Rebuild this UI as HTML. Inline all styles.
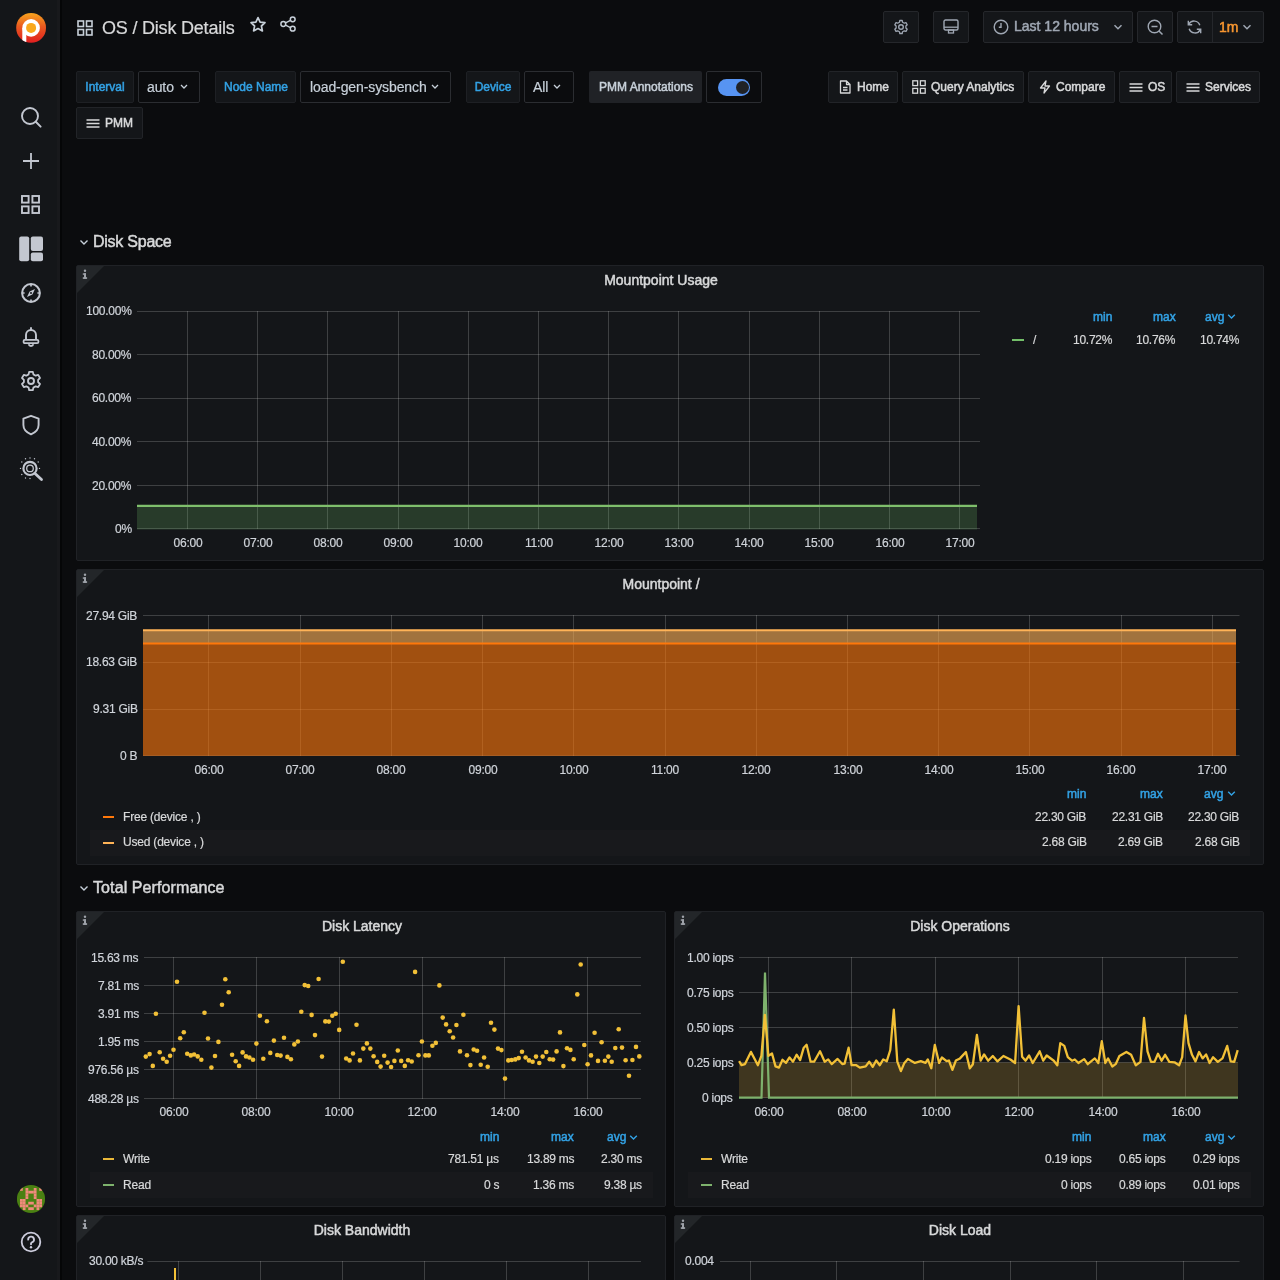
<!DOCTYPE html>
<html><head><meta charset="utf-8"><style>
html,body{margin:0;padding:0;width:1280px;height:1280px;overflow:hidden;background:#0b0c0e;}
body{position:relative;font-family:"Liberation Sans", sans-serif;}
.t{position:absolute;white-space:nowrap;line-height:1;will-change:transform;}
.b{position:absolute;}
.s{position:absolute;overflow:visible;}
</style></head><body>
<div class="b" style="left:0px;top:0px;width:60px;height:1280px;background:#141619;border-radius:0px;box-sizing:border-box;"></div>
<div class="b" style="left:57px;top:0px;width:3px;height:1280px;background:#18191c;border-radius:0px;box-sizing:border-box;"></div>
<div class="b" style="left:60px;top:0px;width:2px;height:1280px;background:#050607;border-radius:0px;box-sizing:border-box;"></div>
<svg class="s" style="left:14px;top:11px;" width="34" height="34" viewBox="0 0 34 34">
<defs><linearGradient id="lg" x1="0" y1="0" x2="0" y2="1"><stop offset="0" stop-color="#f7a41e"/><stop offset="0.45" stop-color="#ea5a1f"/><stop offset="1" stop-color="#e11e20"/></linearGradient>
<clipPath id="lc"><circle cx="17.1" cy="16.9" r="14.9"/></clipPath></defs>
<circle cx="17.1" cy="16.9" r="14.9" fill="url(#lg)"/>
<g clip-path="url(#lc)" fill="#fff"><circle cx="17.1" cy="16.9" r="8.8"/><rect x="8.3" y="16.9" width="4" height="18"/></g>
<circle cx="17.1" cy="16.9" r="5" fill="#f9a81c"/>
</svg>
<svg class="s" style="left:20px;top:105px;" width="23" height="23" viewBox="0 0 23 23"><circle cx="10" cy="11" r="8" fill="none" stroke="#c3c7d0" stroke-width="1.9"/><path d="M15.8 16.8 L20.6 21.6" stroke="#c3c7d0" stroke-width="2" stroke-linecap="round"/></svg>
<svg class="s" style="left:20px;top:150px;" width="22" height="22" viewBox="0 0 22 22"><path d="M11 3 V19 M3 11 H19" stroke="#c3c7d0" stroke-width="1.8"/></svg>
<svg class="s" style="left:20px;top:194px;" width="22" height="22" viewBox="0 0 22 22"><rect x="2.0" y="2.0" width="6.6" height="6.6" fill="none" stroke="#c3c7d0" stroke-width="1.9"/><rect x="2.0" y="12.4" width="6.6" height="6.6" fill="none" stroke="#c3c7d0" stroke-width="1.9"/><rect x="12.4" y="2.0" width="6.6" height="6.6" fill="none" stroke="#c3c7d0" stroke-width="1.9"/><rect x="12.4" y="12.4" width="6.6" height="6.6" fill="none" stroke="#c3c7d0" stroke-width="1.9"/></svg>
<svg class="s" style="left:19px;top:236px;" width="25" height="26" viewBox="0 0 25 26"><rect x="0.2" y="0.4" width="10" height="24.8" rx="2" fill="#c3c7d0"/><rect x="11.8" y="0.4" width="12.2" height="14.6" rx="2" fill="#c3c7d0"/><rect x="11.8" y="16.6" width="12.2" height="8.6" rx="2" fill="#c3c7d0"/></svg>
<svg class="s" style="left:20px;top:282px;" width="22" height="22" viewBox="0 0 22 22"><circle cx="11" cy="11" r="8.9" fill="none" stroke="#c3c7d0" stroke-width="2"/><path d="M15 7 L12.4 12.4 L7 15 L9.6 9.6 Z" fill="#c3c7d0"/><circle cx="11" cy="11" r="1" fill="#141619"/><path d="M11 2 V4.6 M11 17.4 V20 M2 11 H4.6 M17.4 11 H20" stroke="#c3c7d0" stroke-width="1.7"/></svg>
<svg class="s" style="left:20px;top:326px;" width="22" height="22" viewBox="0 0 22 22"><path d="M6 13.5 V9 A5 5 0 0 1 16 9 V13.5" fill="none" stroke="#c3c7d0" stroke-width="1.9"/><rect x="3.6" y="13.8" width="14.8" height="3.4" rx="1.2" fill="none" stroke="#c3c7d0" stroke-width="1.8"/><path d="M8.6 18.2 A2.5 2.5 0 0 0 13.4 18.2" stroke="#c3c7d0" stroke-width="1.8" fill="none"/><path d="M11 1.2 V4" stroke="#c3c7d0" stroke-width="1.9"/></svg>
<svg class="s" style="left:20px;top:370px;" width="22" height="22" viewBox="0 0 22 22"><circle cx="11" cy="11" r="3" fill="none" stroke="#c3c7d0" stroke-width="1.9"/><path d="M9.2 1.8 H12.8 L13.4 4.4 L15.7 5.7 L18.2 4.9 L20 8 L18.1 9.8 V12.2 L20 14 L18.2 17.1 L15.7 16.3 L13.4 17.6 L12.8 20.2 H9.2 L8.6 17.6 L6.3 16.3 L3.8 17.1 L2 14 L3.9 12.2 V9.8 L2 8 L3.8 4.9 L6.3 5.7 L8.6 4.4 Z" fill="none" stroke="#c3c7d0" stroke-width="1.8" stroke-linejoin="round"/></svg>
<svg class="s" style="left:20px;top:414px;" width="22" height="22" viewBox="0 0 22 22"><path d="M11 1.8 L18.6 4.6 V11 C18.6 15.6 15.2 18.6 11 20.4 C6.8 18.6 3.4 15.6 3.4 11 V4.6 Z" fill="none" stroke="#c3c7d0" stroke-width="1.9" stroke-linejoin="round"/></svg>
<svg class="s" style="left:19px;top:456px;" width="25" height="26" viewBox="0 0 25 26"><circle cx="11" cy="12.4" r="6.6" fill="none" stroke="#c3c7d0" stroke-width="2.2"/><circle cx="11" cy="12.4" r="3.3" fill="none" stroke="#c3c7d0" stroke-width="1.3"/><path d="M16 17.4 L22.5 23.5" stroke="#c3c7d0" stroke-width="2.8" stroke-linecap="round"/><g fill="#c3c7d0"><circle cx="11" cy="2" r="0.7"/><circle cx="6.5" cy="2.8" r="0.7"/><circle cx="15.5" cy="2.8" r="0.7"/><circle cx="2.8" cy="6" r="0.7"/><circle cx="19.2" cy="6" r="0.7"/><circle cx="1.5" cy="12.4" r="0.7"/><circle cx="20.5" cy="12.4" r="0.7"/><circle cx="2.8" cy="18.5" r="0.7"/><circle cx="6.5" cy="22" r="0.7"/><circle cx="11" cy="22.5" r="0.7"/></g></svg>
<svg class="s" style="left:17px;top:1185px;" width="28" height="28" viewBox="0 0 28 28"><clipPath id="av"><circle cx="14" cy="14" r="14.1"/></clipPath><g clip-path="url(#av)"><rect width="28" height="28" fill="#4a8012"/><g fill="#f08a7c"><rect x="3.00" y="3.00" width="2.8" height="2.8"/><rect x="8.50" y="3.00" width="2.8" height="2.8"/><rect x="16.75" y="3.00" width="2.8" height="2.8"/><rect x="22.25" y="3.00" width="2.8" height="2.8"/><rect x="8.50" y="5.75" width="2.8" height="2.8"/><rect x="11.25" y="5.75" width="2.8" height="2.8"/><rect x="14.00" y="5.75" width="2.8" height="2.8"/><rect x="16.75" y="5.75" width="2.8" height="2.8"/><rect x="8.50" y="8.50" width="2.8" height="2.8"/><rect x="16.75" y="8.50" width="2.8" height="2.8"/><rect x="8.50" y="11.25" width="2.8" height="2.8"/><rect x="16.75" y="11.25" width="2.8" height="2.8"/><rect x="3.00" y="14.00" width="2.8" height="2.8"/><rect x="5.75" y="14.00" width="2.8" height="2.8"/><rect x="19.50" y="14.00" width="2.8" height="2.8"/><rect x="22.25" y="14.00" width="2.8" height="2.8"/><rect x="3.00" y="16.75" width="2.8" height="2.8"/><rect x="5.75" y="16.75" width="2.8" height="2.8"/><rect x="11.25" y="16.75" width="2.8" height="2.8"/><rect x="14.00" y="16.75" width="2.8" height="2.8"/><rect x="19.50" y="16.75" width="2.8" height="2.8"/><rect x="22.25" y="16.75" width="2.8" height="2.8"/><rect x="3.00" y="19.50" width="2.8" height="2.8"/><rect x="5.75" y="19.50" width="2.8" height="2.8"/><rect x="8.50" y="19.50" width="2.8" height="2.8"/><rect x="16.75" y="19.50" width="2.8" height="2.8"/><rect x="19.50" y="19.50" width="2.8" height="2.8"/><rect x="22.25" y="19.50" width="2.8" height="2.8"/><rect x="5.75" y="22.25" width="2.8" height="2.8"/><rect x="11.25" y="22.25" width="2.8" height="2.8"/><rect x="14.00" y="22.25" width="2.8" height="2.8"/><rect x="19.50" y="22.25" width="2.8" height="2.8"/></g></g></svg>
<svg class="s" style="left:20px;top:1231px;" width="22" height="22" viewBox="0 0 22 22"><circle cx="11" cy="11" r="9.3" fill="none" stroke="#ccccdc" stroke-width="1.8"/><path d="M8.2 8.6 A2.9 2.9 0 1 1 11.9 11.3 C11.2 11.6 11 12 11 12.8 V13.3" fill="none" stroke="#ccccdc" stroke-width="1.9" stroke-linecap="round"/><circle cx="11" cy="16.3" r="1.2" fill="#ccccdc"/></svg>
<svg class="s" style="left:77px;top:20px;" width="16" height="16" viewBox="0 0 16 16"><rect x="1" y="1" width="5.5" height="5.5" fill="none" stroke="#c7d0d9" stroke-width="1.6"/><rect x="9.5" y="1" width="5.5" height="5.5" fill="none" stroke="#c7d0d9" stroke-width="1.6"/><rect x="1" y="9.5" width="5.5" height="5.5" fill="none" stroke="#c7d0d9" stroke-width="1.6"/><rect x="9.5" y="9.5" width="5.5" height="5.5" fill="none" stroke="#c7d0d9" stroke-width="1.6"/></svg>
<div class="t" style="left:102px;top:18.76px;font-size:18px;color:#d8d9da;font-weight:normal;letter-spacing:-0.2px;-webkit-text-stroke:0.2px #d8d9da;">OS / Disk Details</div>
<svg class="s" style="left:249px;top:16px;" width="18" height="17" viewBox="0 0 18 17"><path d="M9 1.6 L11.1 6.1 L16 6.7 L12.4 10 L13.4 14.9 L9 12.5 L4.6 14.9 L5.6 10 L2 6.7 L6.9 6.1 Z" fill="none" stroke="#c7d0d9" stroke-width="1.7" stroke-linejoin="round"/></svg>
<svg class="s" style="left:279px;top:15px;" width="18" height="18" viewBox="0 0 18 18"><circle cx="13.7" cy="4.3" r="2.4" fill="none" stroke="#c7d0d9" stroke-width="1.5"/><circle cx="4.3" cy="9" r="2.4" fill="none" stroke="#c7d0d9" stroke-width="1.5"/><circle cx="13.7" cy="13.7" r="2.4" fill="none" stroke="#c7d0d9" stroke-width="1.5"/><path d="M6.5 7.9 L11.5 5.4 M6.5 10.1 L11.5 12.6" stroke="#c7d0d9" stroke-width="1.4"/></svg>
<div class="b" style="left:883px;top:11px;width:36px;height:32px;background:#141619;border:1px solid #25272b;border-radius:2px;box-sizing:border-box;"></div>
<svg class="s" style="left:893px;top:19px;" width="16" height="16" viewBox="0 0 16 16"><circle cx="8" cy="8" r="2.3" fill="none" stroke="#9fa7b3" stroke-width="1.4"/><path d="M6.8 1.5 H9.2 L9.6 3.3 L11.3 4.2 L13 3.6 L14.2 5.7 L12.9 7 V9 L14.2 10.3 L13 12.4 L11.3 11.8 L9.6 12.7 L9.2 14.5 H6.8 L6.4 12.7 L4.7 11.8 L3 12.4 L1.8 10.3 L3.1 9 V7 L1.8 5.7 L3 3.6 L4.7 4.2 L6.4 3.3 Z" fill="none" stroke="#9fa7b3" stroke-width="1.3" stroke-linejoin="round"/></svg>
<div class="b" style="left:933px;top:11px;width:36px;height:32px;background:#141619;border:1px solid #25272b;border-radius:2px;box-sizing:border-box;"></div>
<svg class="s" style="left:943px;top:19px;" width="16" height="16" viewBox="0 0 16 16"><rect x="1" y="1" width="14" height="10" rx="1.5" fill="none" stroke="#9fa7b3" stroke-width="1.4"/><path d="M1 8.2 H15" stroke="#9fa7b3" stroke-width="1.3"/><rect x="5.5" y="11" width="5" height="3" fill="none" stroke="#9fa7b3" stroke-width="1.3"/></svg>
<div class="b" style="left:983px;top:11px;width:150px;height:32px;background:#141619;border:1px solid #25272b;border-radius:2px;box-sizing:border-box;"></div>
<svg class="s" style="left:993px;top:19px;" width="16" height="16" viewBox="0 0 16 16"><circle cx="8" cy="8" r="6.8" fill="none" stroke="#9fa7b3" stroke-width="1.4"/><path d="M8 4 V8.3 H5.8" fill="none" stroke="#9fa7b3" stroke-width="1.4"/></svg>
<div class="t" style="left:1014px;top:19.15px;font-size:14px;color:#9fa7b3;font-weight:normal;letter-spacing:0px;-webkit-text-stroke:0.5px #9fa7b3;">Last 12 hours</div>
<svg class="s" style="left:1113px;top:22px;" width="10" height="10" viewBox="0 0 10 10"><path d="M1.5 3.2 L5 6.7 L8.5 3.2" fill="none" stroke="#9fa7b3" stroke-width="1.5"/></svg>
<div class="b" style="left:1137px;top:11px;width:36px;height:32px;background:#141619;border:1px solid #25272b;border-radius:2px;box-sizing:border-box;"></div>
<svg class="s" style="left:1147px;top:19px;" width="17" height="17" viewBox="0 0 17 17"><circle cx="7.5" cy="7.5" r="6.3" fill="none" stroke="#9fa7b3" stroke-width="1.4"/><path d="M4.5 7.5 H10.5 M12 12 L15.5 15.5" stroke="#9fa7b3" stroke-width="1.5"/></svg>
<div class="b" style="left:1177px;top:11px;width:87px;height:32px;background:#141619;border:1px solid #25272b;border-radius:2px;box-sizing:border-box;"></div>
<div class="b" style="left:1212px;top:12px;width:1px;height:30px;background:#25272b;border-radius:0px;box-sizing:border-box;"></div>
<svg class="s" style="left:1186px;top:19px;" width="17" height="16" viewBox="0 0 17 16"><path d="M13.8 6.3 A6 6 0 0 0 2.8 5.2 M3.2 9.7 A6 6 0 0 0 14.2 10.8" fill="none" stroke="#9fa7b3" stroke-width="1.4"/><path d="M2.3 1.8 V5.7 H6.2 M14.7 14.2 V10.3 H10.8" fill="none" stroke="#9fa7b3" stroke-width="1.4"/></svg>
<div class="t" style="left:1219px;top:20.15px;font-size:14px;color:#f79630;font-weight:normal;letter-spacing:0px;-webkit-text-stroke:0.5px #f79630;">1m</div>
<svg class="s" style="left:1242px;top:22px;" width="10" height="10" viewBox="0 0 10 10"><path d="M1.5 3.2 L5 6.7 L8.5 3.2" fill="none" stroke="#9fa7b3" stroke-width="1.5"/></svg>
<div class="b" style="left:76px;top:71px;width:58px;height:32px;background:#141619;border:1px solid #1e2024;border-radius:2px;box-sizing:border-box;"></div>
<div class="t" style="left:-195.0px;width:600px;text-align:center;top:80.84px;font-size:12px;color:#33a2e5;font-weight:normal;letter-spacing:0px;-webkit-text-stroke:0.5px #33a2e5;">Interval</div>
<div class="b" style="left:138px;top:71px;width:62px;height:32px;background:#0b0c0e;border:1px solid #2b2d31;border-radius:2px;box-sizing:border-box;"></div>
<div class="t" style="left:147px;top:80.15px;font-size:14px;color:#c7d0d9;font-weight:normal;letter-spacing:-0.1px;-webkit-text-stroke:0.2px #c7d0d9;">auto</div>
<svg class="s" style="left:179px;top:81px;" width="10" height="10" viewBox="0 0 10 10"><path d="M2 4 L5 7 L8 4" fill="none" stroke="#c7d0d9" stroke-width="1.3"/></svg>
<div class="b" style="left:215px;top:71px;width:81px;height:32px;background:#141619;border:1px solid #1e2024;border-radius:2px;box-sizing:border-box;"></div>
<div class="t" style="left:-44.5px;width:600px;text-align:center;top:80.84px;font-size:12px;color:#33a2e5;font-weight:normal;letter-spacing:0px;-webkit-text-stroke:0.5px #33a2e5;">Node Name</div>
<div class="b" style="left:300px;top:71px;width:151px;height:32px;background:#0b0c0e;border:1px solid #2b2d31;border-radius:2px;box-sizing:border-box;"></div>
<div class="t" style="left:309.5px;top:80.15px;font-size:14px;color:#c7d0d9;font-weight:normal;letter-spacing:-0.1px;-webkit-text-stroke:0.2px #c7d0d9;">load-gen-sysbench</div>
<svg class="s" style="left:430px;top:81px;" width="10" height="10" viewBox="0 0 10 10"><path d="M2 4 L5 7 L8 4" fill="none" stroke="#c7d0d9" stroke-width="1.3"/></svg>
<div class="b" style="left:466px;top:71px;width:54px;height:32px;background:#141619;border:1px solid #1e2024;border-radius:2px;box-sizing:border-box;"></div>
<div class="t" style="left:193.0px;width:600px;text-align:center;top:80.84px;font-size:12px;color:#33a2e5;font-weight:normal;letter-spacing:0px;-webkit-text-stroke:0.5px #33a2e5;">Device</div>
<div class="b" style="left:524px;top:71px;width:50px;height:32px;background:#0b0c0e;border:1px solid #2b2d31;border-radius:2px;box-sizing:border-box;"></div>
<div class="t" style="left:533px;top:80.15px;font-size:14px;color:#c7d0d9;font-weight:normal;letter-spacing:-0.1px;-webkit-text-stroke:0.2px #c7d0d9;">All</div>
<svg class="s" style="left:552px;top:81px;" width="10" height="10" viewBox="0 0 10 10"><path d="M2 4 L5 7 L8 4" fill="none" stroke="#c7d0d9" stroke-width="1.3"/></svg>
<div class="b" style="left:589px;top:71px;width:113px;height:32px;background:#202226;border-radius:2px;box-sizing:border-box;"></div>
<div class="t" style="left:345.5px;width:600px;text-align:center;top:80.84px;font-size:12px;color:#c7d0d9;font-weight:normal;letter-spacing:0px;-webkit-text-stroke:0.5px #c7d0d9;">PMM Annotations</div>
<div class="b" style="left:706px;top:71px;width:56px;height:32px;background:#0b0c0e;border:1px solid #2b2d31;border-radius:2px;box-sizing:border-box;"></div>
<div class="b" style="left:718px;top:79px;width:32px;height:16.5px;background:#5794f2;border-radius:8.5px;box-sizing:border-box;"></div>
<div class="b" style="left:735.5px;top:80.5px;width:13.5px;height:13.5px;border-radius:50%;background:#202226;"></div>
<div class="b" style="left:828px;top:71px;width:70px;height:32px;background:#141619;border:1px solid #222428;border-radius:2px;box-sizing:border-box;"></div>
<svg class="s" style="left:838px;top:80px;" width="14" height="14" viewBox="0 0 14 14"><path d="M2.5 1 H8.5 L12 4.5 V13 H2.5 Z M8.5 1 V4.5 H12 M5 7.5 H9.5 M5 10 H9.5" fill="none" stroke="#d8d9da" stroke-width="1.3" stroke-linejoin="round"/></svg>
<div class="t" style="left:856.5px;top:80.84px;font-size:12px;color:#d8d9da;font-weight:normal;letter-spacing:0px;-webkit-text-stroke:0.5px #d8d9da;">Home</div>
<div class="b" style="left:902px;top:71px;width:122px;height:32px;background:#141619;border:1px solid #222428;border-radius:2px;box-sizing:border-box;"></div>
<svg class="s" style="left:912px;top:80px;" width="14" height="14" viewBox="0 0 14 14"><rect x="0.8" y="0.8" width="4.8" height="4.8" fill="none" stroke="#d8d9da" stroke-width="1.3"/><rect x="8.4" y="0.8" width="4.8" height="4.8" fill="none" stroke="#d8d9da" stroke-width="1.3"/><rect x="0.8" y="8.4" width="4.8" height="4.8" fill="none" stroke="#d8d9da" stroke-width="1.3"/><rect x="8.4" y="8.4" width="4.8" height="4.8" fill="none" stroke="#d8d9da" stroke-width="1.3"/></svg>
<div class="t" style="left:930.5px;top:80.84px;font-size:12px;color:#d8d9da;font-weight:normal;letter-spacing:0px;-webkit-text-stroke:0.5px #d8d9da;">Query Analytics</div>
<div class="b" style="left:1028px;top:71px;width:87px;height:32px;background:#141619;border:1px solid #222428;border-radius:2px;box-sizing:border-box;"></div>
<svg class="s" style="left:1038px;top:80px;" width="14" height="14" viewBox="0 0 14 14"><path d="M8 1 L2.5 8 H7 L6 13 L11.5 6 H7 Z" fill="none" stroke="#d8d9da" stroke-width="1.3" stroke-linejoin="round"/></svg>
<div class="t" style="left:1056px;top:80.84px;font-size:12px;color:#d8d9da;font-weight:normal;letter-spacing:0px;-webkit-text-stroke:0.5px #d8d9da;">Compare</div>
<div class="b" style="left:1119px;top:71px;width:53px;height:32px;background:#141619;border:1px solid #222428;border-radius:2px;box-sizing:border-box;"></div>
<svg class="s" style="left:1129px;top:81.5px;" width="14" height="11" viewBox="0 0 14 11"><path d="M0.5 2 H13.5 M0.5 5.5 H13.5 M0.5 9 H13.5" stroke="#d8d9da" stroke-width="1.5"/></svg>
<div class="t" style="left:1147.5px;top:80.84px;font-size:12px;color:#d8d9da;font-weight:normal;letter-spacing:0px;-webkit-text-stroke:0.5px #d8d9da;">OS</div>
<div class="b" style="left:1176px;top:71px;width:84px;height:32px;background:#141619;border:1px solid #222428;border-radius:2px;box-sizing:border-box;"></div>
<svg class="s" style="left:1186px;top:81.5px;" width="14" height="11" viewBox="0 0 14 11"><path d="M0.5 2 H13.5 M0.5 5.5 H13.5 M0.5 9 H13.5" stroke="#d8d9da" stroke-width="1.5"/></svg>
<div class="t" style="left:1204.5px;top:80.84px;font-size:12px;color:#d8d9da;font-weight:normal;letter-spacing:0px;-webkit-text-stroke:0.5px #d8d9da;">Services</div>
<div class="b" style="left:76px;top:107px;width:67px;height:32px;background:#141619;border:1px solid #222428;border-radius:2px;box-sizing:border-box;"></div>
<svg class="s" style="left:86px;top:117.5px;" width="14" height="11" viewBox="0 0 14 11"><path d="M0.5 2 H13.5 M0.5 5.5 H13.5 M0.5 9 H13.5" stroke="#d8d9da" stroke-width="1.5"/></svg>
<div class="t" style="left:104.5px;top:116.84px;font-size:12px;color:#d8d9da;font-weight:normal;letter-spacing:0px;-webkit-text-stroke:0.5px #d8d9da;">PMM</div>
<svg class="s" style="left:79px;top:239px;" width="10" height="8" viewBox="0 0 10 8"><path d="M1.5 1.5 L5 5 L8.5 1.5" fill="none" stroke="#c7d0d9" stroke-width="1.4"/></svg>
<div class="t" style="left:92.5px;top:234.06px;font-size:16px;color:#d8d9da;font-weight:normal;letter-spacing:-0.25px;-webkit-text-stroke:0.5px #d8d9da;">Disk Space</div>
<div class="b" style="left:76px;top:265px;width:1188px;height:296px;background:#141619;border:1px solid #202226;border-radius:2px;box-sizing:border-box;"></div>
<svg class="s" style="left:77px;top:266px;" width="28" height="28" viewBox="0 0 28 28"><path d="M0 0 H27 L0 27 Z" fill="#232629"/><g fill="#9ea2a9"><circle cx="8" cy="4.8" r="1.2"/><rect x="5.8" y="7.3" width="3.2" height="1.5"/><rect x="7" y="7.3" width="2" height="5.5"/><rect x="5.8" y="11.2" width="4.3" height="1.7"/></g></svg>
<div class="t" style="left:361px;width:600px;text-align:center;top:273.15px;font-size:14px;color:#d8d9da;font-weight:normal;letter-spacing:0px;-webkit-text-stroke:0.5px #d8d9da;">Mountpoint Usage</div>
<svg class="s" style="left:0px;top:0px;pointer-events:none" width="1280" height="1280" viewBox="0 0 1280 1280"><g stroke="rgba(255,255,255,0.18)" stroke-width="1"><line x1="137" y1="311.5" x2="980" y2="311.5" /><line x1="137" y1="354.5" x2="980" y2="354.5" /><line x1="137" y1="398.5" x2="980" y2="398.5" /><line x1="137" y1="441.5" x2="980" y2="441.5" /><line x1="137" y1="485.5" x2="980" y2="485.5" /><line x1="137" y1="528.5" x2="980" y2="528.5" /><line x1="187.5" y1="311" x2="187.5" y2="529" /><line x1="257.5" y1="311" x2="257.5" y2="529" /><line x1="327.5" y1="311" x2="327.5" y2="529" /><line x1="398.5" y1="311" x2="398.5" y2="529" /><line x1="468.5" y1="311" x2="468.5" y2="529" /><line x1="538.5" y1="311" x2="538.5" y2="529" /><line x1="608.5" y1="311" x2="608.5" y2="529" /><line x1="678.5" y1="311" x2="678.5" y2="529" /><line x1="749.5" y1="311" x2="749.5" y2="529" /><line x1="819.5" y1="311" x2="819.5" y2="529" /><line x1="889.5" y1="311" x2="889.5" y2="529" /><line x1="959.5" y1="311" x2="959.5" y2="529" /></g><rect x="137" y="506" width="840" height="23.5" fill="rgba(115,191,105,0.22)"/><line x1="137" y1="505.8" x2="977" y2="505.8" stroke="#7fbf6c" stroke-width="2.3"/></svg>
<div class="t" style="right:1148.5px;top:305.44px;font-size:12px;color:#d0d4da;font-weight:normal;letter-spacing:-0.25px;-webkit-text-stroke:0.2px #d0d4da;">100.00%</div>
<div class="t" style="right:1148.5px;top:348.54px;font-size:12px;color:#d0d4da;font-weight:normal;letter-spacing:-0.25px;-webkit-text-stroke:0.2px #d0d4da;">80.00%</div>
<div class="t" style="right:1148.5px;top:392.44px;font-size:12px;color:#d0d4da;font-weight:normal;letter-spacing:-0.25px;-webkit-text-stroke:0.2px #d0d4da;">60.00%</div>
<div class="t" style="right:1148.5px;top:435.54px;font-size:12px;color:#d0d4da;font-weight:normal;letter-spacing:-0.25px;-webkit-text-stroke:0.2px #d0d4da;">40.00%</div>
<div class="t" style="right:1148.5px;top:479.54px;font-size:12px;color:#d0d4da;font-weight:normal;letter-spacing:-0.25px;-webkit-text-stroke:0.2px #d0d4da;">20.00%</div>
<div class="t" style="right:1148.5px;top:522.64px;font-size:12px;color:#d0d4da;font-weight:normal;letter-spacing:-0.25px;-webkit-text-stroke:0.2px #d0d4da;">0%</div>
<div class="t" style="left:-112.5px;width:600px;text-align:center;top:536.84px;font-size:12px;color:#d0d4da;font-weight:normal;letter-spacing:-0.25px;-webkit-text-stroke:0.2px #d0d4da;">06:00</div>
<div class="t" style="left:-42.30000000000001px;width:600px;text-align:center;top:536.84px;font-size:12px;color:#d0d4da;font-weight:normal;letter-spacing:-0.25px;-webkit-text-stroke:0.2px #d0d4da;">07:00</div>
<div class="t" style="left:27.899999999999977px;width:600px;text-align:center;top:536.84px;font-size:12px;color:#d0d4da;font-weight:normal;letter-spacing:-0.25px;-webkit-text-stroke:0.2px #d0d4da;">08:00</div>
<div class="t" style="left:98.10000000000002px;width:600px;text-align:center;top:536.84px;font-size:12px;color:#d0d4da;font-weight:normal;letter-spacing:-0.25px;-webkit-text-stroke:0.2px #d0d4da;">09:00</div>
<div class="t" style="left:168.3px;width:600px;text-align:center;top:536.84px;font-size:12px;color:#d0d4da;font-weight:normal;letter-spacing:-0.25px;-webkit-text-stroke:0.2px #d0d4da;">10:00</div>
<div class="t" style="left:238.5px;width:600px;text-align:center;top:536.84px;font-size:12px;color:#d0d4da;font-weight:normal;letter-spacing:-0.25px;-webkit-text-stroke:0.2px #d0d4da;">11:00</div>
<div class="t" style="left:308.70000000000005px;width:600px;text-align:center;top:536.84px;font-size:12px;color:#d0d4da;font-weight:normal;letter-spacing:-0.25px;-webkit-text-stroke:0.2px #d0d4da;">12:00</div>
<div class="t" style="left:378.9000000000001px;width:600px;text-align:center;top:536.84px;font-size:12px;color:#d0d4da;font-weight:normal;letter-spacing:-0.25px;-webkit-text-stroke:0.2px #d0d4da;">13:00</div>
<div class="t" style="left:449.1px;width:600px;text-align:center;top:536.84px;font-size:12px;color:#d0d4da;font-weight:normal;letter-spacing:-0.25px;-webkit-text-stroke:0.2px #d0d4da;">14:00</div>
<div class="t" style="left:519.3000000000001px;width:600px;text-align:center;top:536.84px;font-size:12px;color:#d0d4da;font-weight:normal;letter-spacing:-0.25px;-webkit-text-stroke:0.2px #d0d4da;">15:00</div>
<div class="t" style="left:589.5px;width:600px;text-align:center;top:536.84px;font-size:12px;color:#d0d4da;font-weight:normal;letter-spacing:-0.25px;-webkit-text-stroke:0.2px #d0d4da;">16:00</div>
<div class="t" style="left:659.7px;width:600px;text-align:center;top:536.84px;font-size:12px;color:#d0d4da;font-weight:normal;letter-spacing:-0.25px;-webkit-text-stroke:0.2px #d0d4da;">17:00</div>
<div class="t" style="right:168px;top:310.84px;font-size:12px;color:#33a2e5;font-weight:normal;letter-spacing:0px;-webkit-text-stroke:0.5px #33a2e5;">min</div>
<div class="t" style="right:104.70000000000005px;top:310.84px;font-size:12px;color:#33a2e5;font-weight:normal;letter-spacing:0px;-webkit-text-stroke:0.5px #33a2e5;">max</div>
<div class="t" style="right:56px;top:310.84px;font-size:12px;color:#33a2e5;font-weight:normal;letter-spacing:0px;-webkit-text-stroke:0.5px #33a2e5;">avg</div>
<svg class="s" style="left:1227px;top:313px;" width="9" height="7" viewBox="0 0 9 7"><path d="M1.2 1.8 L4.5 5 L7.8 1.8" fill="none" stroke="#33a2e5" stroke-width="1.4"/></svg>
<div class="b" style="left:1012px;top:339px;width:12px;height:2px;background:#73bf69;border-radius:0px;box-sizing:border-box;"></div>
<div class="t" style="left:1033px;top:333.84px;font-size:12px;color:#d8d9da;font-weight:normal;letter-spacing:0px;-webkit-text-stroke:0.2px #d8d9da;">/</div>
<div class="t" style="right:168px;top:333.84px;font-size:12px;color:#d8d9da;font-weight:normal;letter-spacing:-0.25px;-webkit-text-stroke:0.2px #d8d9da;">10.72%</div>
<div class="t" style="right:104.70000000000005px;top:333.84px;font-size:12px;color:#d8d9da;font-weight:normal;letter-spacing:-0.25px;-webkit-text-stroke:0.2px #d8d9da;">10.76%</div>
<div class="t" style="right:40.59999999999991px;top:333.84px;font-size:12px;color:#d8d9da;font-weight:normal;letter-spacing:-0.25px;-webkit-text-stroke:0.2px #d8d9da;">10.74%</div>
<div class="b" style="left:76px;top:569px;width:1188px;height:296px;background:#141619;border:1px solid #202226;border-radius:2px;box-sizing:border-box;"></div>
<svg class="s" style="left:77px;top:570px;" width="28" height="28" viewBox="0 0 28 28"><path d="M0 0 H27 L0 27 Z" fill="#232629"/><g fill="#9ea2a9"><circle cx="8" cy="4.8" r="1.2"/><rect x="5.8" y="7.3" width="3.2" height="1.5"/><rect x="7" y="7.3" width="2" height="5.5"/><rect x="5.8" y="11.2" width="4.3" height="1.7"/></g></svg>
<div class="t" style="left:361px;width:600px;text-align:center;top:577.15px;font-size:14px;color:#d8d9da;font-weight:normal;letter-spacing:0px;-webkit-text-stroke:0.5px #d8d9da;">Mountpoint /</div>
<svg class="s" style="left:0px;top:0px;pointer-events:none" width="1280" height="1280" viewBox="0 0 1280 1280"><g stroke="rgba(255,255,255,0.18)" stroke-width="1"><line x1="143" y1="615.5" x2="1239.5" y2="615.5" /><line x1="143" y1="662.5" x2="1239.5" y2="662.5" /><line x1="143" y1="709.5" x2="1239.5" y2="709.5" /><line x1="143" y1="755.5" x2="1239.5" y2="755.5" /><line x1="208.5" y1="615" x2="208.5" y2="756" /><line x1="300.5" y1="615" x2="300.5" y2="756" /><line x1="391.5" y1="615" x2="391.5" y2="756" /><line x1="482.5" y1="615" x2="482.5" y2="756" /><line x1="573.5" y1="615" x2="573.5" y2="756" /><line x1="665.5" y1="615" x2="665.5" y2="756" /><line x1="756.5" y1="615" x2="756.5" y2="756" /><line x1="847.5" y1="615" x2="847.5" y2="756" /><line x1="938.5" y1="615" x2="938.5" y2="756" /><line x1="1029.5" y1="615" x2="1029.5" y2="756" /><line x1="1121.5" y1="615" x2="1121.5" y2="756" /><line x1="1212.5" y1="615" x2="1212.5" y2="756" /></g><rect x="143" y="643.4" width="1093" height="112.5" fill="rgba(255,120,10,0.6)"/><rect x="143" y="630" width="1093" height="13.4" fill="rgba(255,179,87,0.6)"/><line x1="143" y1="630.2" x2="1236" y2="630.2" stroke="#ffb357" stroke-width="2"/><line x1="143" y1="643.6" x2="1236" y2="643.6" stroke="#ff780a" stroke-width="2"/></svg>
<div class="t" style="right:1142.5px;top:609.54px;font-size:12px;color:#d0d4da;font-weight:normal;letter-spacing:-0.25px;-webkit-text-stroke:0.2px #d0d4da;">27.94 GiB</div>
<div class="t" style="right:1142.5px;top:656.34px;font-size:12px;color:#d0d4da;font-weight:normal;letter-spacing:-0.25px;-webkit-text-stroke:0.2px #d0d4da;">18.63 GiB</div>
<div class="t" style="right:1142.5px;top:703.14px;font-size:12px;color:#d0d4da;font-weight:normal;letter-spacing:-0.25px;-webkit-text-stroke:0.2px #d0d4da;">9.31 GiB</div>
<div class="t" style="right:1142.5px;top:749.64px;font-size:12px;color:#d0d4da;font-weight:normal;letter-spacing:-0.25px;-webkit-text-stroke:0.2px #d0d4da;">0 B</div>
<div class="t" style="left:-91.1px;width:600px;text-align:center;top:763.84px;font-size:12px;color:#d0d4da;font-weight:normal;letter-spacing:-0.25px;-webkit-text-stroke:0.2px #d0d4da;">06:00</div>
<div class="t" style="left:0.12999999999999545px;width:600px;text-align:center;top:763.84px;font-size:12px;color:#d0d4da;font-weight:normal;letter-spacing:-0.25px;-webkit-text-stroke:0.2px #d0d4da;">07:00</div>
<div class="t" style="left:91.36000000000001px;width:600px;text-align:center;top:763.84px;font-size:12px;color:#d0d4da;font-weight:normal;letter-spacing:-0.25px;-webkit-text-stroke:0.2px #d0d4da;">08:00</div>
<div class="t" style="left:182.59000000000003px;width:600px;text-align:center;top:763.84px;font-size:12px;color:#d0d4da;font-weight:normal;letter-spacing:-0.25px;-webkit-text-stroke:0.2px #d0d4da;">09:00</div>
<div class="t" style="left:273.82000000000005px;width:600px;text-align:center;top:763.84px;font-size:12px;color:#d0d4da;font-weight:normal;letter-spacing:-0.25px;-webkit-text-stroke:0.2px #d0d4da;">10:00</div>
<div class="t" style="left:365.05000000000007px;width:600px;text-align:center;top:763.84px;font-size:12px;color:#d0d4da;font-weight:normal;letter-spacing:-0.25px;-webkit-text-stroke:0.2px #d0d4da;">11:00</div>
<div class="t" style="left:456.28px;width:600px;text-align:center;top:763.84px;font-size:12px;color:#d0d4da;font-weight:normal;letter-spacing:-0.25px;-webkit-text-stroke:0.2px #d0d4da;">12:00</div>
<div class="t" style="left:547.51px;width:600px;text-align:center;top:763.84px;font-size:12px;color:#d0d4da;font-weight:normal;letter-spacing:-0.25px;-webkit-text-stroke:0.2px #d0d4da;">13:00</div>
<div class="t" style="left:638.74px;width:600px;text-align:center;top:763.84px;font-size:12px;color:#d0d4da;font-weight:normal;letter-spacing:-0.25px;-webkit-text-stroke:0.2px #d0d4da;">14:00</div>
<div class="t" style="left:729.97px;width:600px;text-align:center;top:763.84px;font-size:12px;color:#d0d4da;font-weight:normal;letter-spacing:-0.25px;-webkit-text-stroke:0.2px #d0d4da;">15:00</div>
<div class="t" style="left:821.2px;width:600px;text-align:center;top:763.84px;font-size:12px;color:#d0d4da;font-weight:normal;letter-spacing:-0.25px;-webkit-text-stroke:0.2px #d0d4da;">16:00</div>
<div class="t" style="left:912.4300000000001px;width:600px;text-align:center;top:763.84px;font-size:12px;color:#d0d4da;font-weight:normal;letter-spacing:-0.25px;-webkit-text-stroke:0.2px #d0d4da;">17:00</div>
<div class="t" style="right:193.4000000000001px;top:787.84px;font-size:12px;color:#33a2e5;font-weight:normal;letter-spacing:0px;-webkit-text-stroke:0.5px #33a2e5;">min</div>
<div class="t" style="right:117.20000000000005px;top:787.84px;font-size:12px;color:#33a2e5;font-weight:normal;letter-spacing:0px;-webkit-text-stroke:0.5px #33a2e5;">max</div>
<div class="t" style="right:56.5px;top:787.84px;font-size:12px;color:#33a2e5;font-weight:normal;letter-spacing:0px;-webkit-text-stroke:0.5px #33a2e5;">avg</div>
<svg class="s" style="left:1226.5px;top:790px;" width="9" height="7" viewBox="0 0 9 7"><path d="M1.2 1.8 L4.5 5 L7.8 1.8" fill="none" stroke="#33a2e5" stroke-width="1.4"/></svg>
<div class="b" style="left:90px;top:829.5px;width:1160px;height:26px;background:#18191c;border-radius:0px;box-sizing:border-box;"></div>
<div class="b" style="left:102.5px;top:816px;width:11px;height:2px;background:#ff780a;border-radius:0px;box-sizing:border-box;"></div>
<div class="t" style="left:123px;top:810.84px;font-size:12px;color:#d8d9da;font-weight:normal;letter-spacing:-0.2px;-webkit-text-stroke:0.2px #d8d9da;">Free (device , )</div>
<div class="t" style="right:193.4000000000001px;top:810.84px;font-size:12px;color:#d8d9da;font-weight:normal;letter-spacing:-0.25px;-webkit-text-stroke:0.2px #d8d9da;">22.30 GiB</div>
<div class="t" style="right:117.20000000000005px;top:810.84px;font-size:12px;color:#d8d9da;font-weight:normal;letter-spacing:-0.25px;-webkit-text-stroke:0.2px #d8d9da;">22.31 GiB</div>
<div class="t" style="right:40.59999999999991px;top:810.84px;font-size:12px;color:#d8d9da;font-weight:normal;letter-spacing:-0.25px;-webkit-text-stroke:0.2px #d8d9da;">22.30 GiB</div>
<div class="b" style="left:102.5px;top:841.5px;width:11px;height:2px;background:#ffb357;border-radius:0px;box-sizing:border-box;"></div>
<div class="t" style="left:123px;top:836.34px;font-size:12px;color:#d8d9da;font-weight:normal;letter-spacing:-0.2px;-webkit-text-stroke:0.2px #d8d9da;">Used (device , )</div>
<div class="t" style="right:193.4000000000001px;top:836.34px;font-size:12px;color:#d8d9da;font-weight:normal;letter-spacing:-0.25px;-webkit-text-stroke:0.2px #d8d9da;">2.68 GiB</div>
<div class="t" style="right:117.20000000000005px;top:836.34px;font-size:12px;color:#d8d9da;font-weight:normal;letter-spacing:-0.25px;-webkit-text-stroke:0.2px #d8d9da;">2.69 GiB</div>
<div class="t" style="right:40.59999999999991px;top:836.34px;font-size:12px;color:#d8d9da;font-weight:normal;letter-spacing:-0.25px;-webkit-text-stroke:0.2px #d8d9da;">2.68 GiB</div>
<svg class="s" style="left:79px;top:885px;" width="10" height="8" viewBox="0 0 10 8"><path d="M1.5 1.5 L5 5 L8.5 1.5" fill="none" stroke="#c7d0d9" stroke-width="1.4"/></svg>
<div class="t" style="left:92.5px;top:880.06px;font-size:16px;color:#d8d9da;font-weight:normal;letter-spacing:0.1px;-webkit-text-stroke:0.5px #d8d9da;">Total Performance</div>
<div class="b" style="left:76px;top:911px;width:590px;height:296px;background:#141619;border:1px solid #202226;border-radius:2px;box-sizing:border-box;"></div>
<svg class="s" style="left:77px;top:912px;" width="28" height="28" viewBox="0 0 28 28"><path d="M0 0 H27 L0 27 Z" fill="#232629"/><g fill="#9ea2a9"><circle cx="8" cy="4.8" r="1.2"/><rect x="5.8" y="7.3" width="3.2" height="1.5"/><rect x="7" y="7.3" width="2" height="5.5"/><rect x="5.8" y="11.2" width="4.3" height="1.7"/></g></svg>
<div class="t" style="left:62px;width:600px;text-align:center;top:919.15px;font-size:14px;color:#d8d9da;font-weight:normal;letter-spacing:0px;-webkit-text-stroke:0.5px #d8d9da;">Disk Latency</div>
<svg class="s" style="left:0px;top:0px;pointer-events:none" width="1280" height="1280" viewBox="0 0 1280 1280"><g stroke="rgba(255,255,255,0.18)" stroke-width="1"><line x1="144" y1="957.5" x2="641" y2="957.5" /><line x1="144" y1="985.5" x2="641" y2="985.5" /><line x1="144" y1="1013.5" x2="641" y2="1013.5" /><line x1="144" y1="1041.5" x2="641" y2="1041.5" /><line x1="144" y1="1069.5" x2="641" y2="1069.5" /><line x1="144" y1="1098.5" x2="641" y2="1098.5" /><line x1="173.5" y1="957" x2="173.5" y2="1099" /><line x1="256.5" y1="957" x2="256.5" y2="1099" /><line x1="339.5" y1="957" x2="339.5" y2="1099" /><line x1="422.5" y1="957" x2="422.5" y2="1099" /><line x1="504.5" y1="957" x2="504.5" y2="1099" /><line x1="587.5" y1="957" x2="587.5" y2="1099" /></g><g fill="#f2c037"><circle cx="145.8" cy="1056.6" r="2.3"/><circle cx="149.6" cy="1054.1" r="2.3"/><circle cx="152.8" cy="1065.9" r="2.3"/><circle cx="155.9" cy="1013.8" r="2.3"/><circle cx="159.7" cy="1052.2" r="2.3"/><circle cx="163.1" cy="1058.8" r="2.3"/><circle cx="166.7" cy="1061.7" r="2.3"/><circle cx="170.1" cy="1055.8" r="2.3"/><circle cx="173.5" cy="1049.7" r="2.3"/><circle cx="177.0" cy="981.8" r="2.3"/><circle cx="180.2" cy="1038.3" r="2.3"/><circle cx="183.8" cy="1032.2" r="2.3"/><circle cx="187.2" cy="1053.7" r="2.3"/><circle cx="190.8" cy="1055.4" r="2.3"/><circle cx="194.1" cy="1054.5" r="2.3"/><circle cx="197.7" cy="1056.4" r="2.3"/><circle cx="201.3" cy="1059.8" r="2.3"/><circle cx="204.5" cy="1012.8" r="2.3"/><circle cx="208.0" cy="1038.5" r="2.3"/><circle cx="211.4" cy="1067.6" r="2.3"/><circle cx="215.0" cy="1056.0" r="2.3"/><circle cx="218.4" cy="1041.9" r="2.3"/><circle cx="222.0" cy="1004.8" r="2.3"/><circle cx="225.3" cy="979.2" r="2.3"/><circle cx="228.7" cy="992.3" r="2.3"/><circle cx="232.1" cy="1054.8" r="2.3"/><circle cx="235.7" cy="1061.3" r="2.3"/><circle cx="239.1" cy="1065.9" r="2.3"/><circle cx="242.6" cy="1052.4" r="2.3"/><circle cx="246.0" cy="1056.4" r="2.3"/><circle cx="249.4" cy="1057.5" r="2.3"/><circle cx="253.0" cy="1059.8" r="2.3"/><circle cx="256.4" cy="1043.6" r="2.3"/><circle cx="259.9" cy="1015.7" r="2.3"/><circle cx="263.3" cy="1058.8" r="2.3"/><circle cx="266.9" cy="1021.2" r="2.3"/><circle cx="270.3" cy="1052.9" r="2.3"/><circle cx="273.9" cy="1040.6" r="2.3"/><circle cx="277.2" cy="1055.0" r="2.3"/><circle cx="280.6" cy="1055.6" r="2.3"/><circle cx="284.0" cy="1037.7" r="2.3"/><circle cx="287.4" cy="1056.9" r="2.3"/><circle cx="290.9" cy="1059.2" r="2.3"/><circle cx="294.3" cy="1044.4" r="2.3"/><circle cx="297.9" cy="1041.5" r="2.3"/><circle cx="301.3" cy="1011.7" r="2.3"/><circle cx="304.7" cy="985.1" r="2.3"/><circle cx="308.2" cy="986.0" r="2.3"/><circle cx="311.6" cy="1014.9" r="2.3"/><circle cx="315.0" cy="1035.1" r="2.3"/><circle cx="318.6" cy="979.0" r="2.3"/><circle cx="322.0" cy="1056.6" r="2.3"/><circle cx="325.3" cy="1021.4" r="2.3"/><circle cx="328.9" cy="1021.6" r="2.3"/><circle cx="332.3" cy="1015.7" r="2.3"/><circle cx="335.7" cy="1013.8" r="2.3"/><circle cx="339.2" cy="1029.9" r="2.3"/><circle cx="342.8" cy="961.7" r="2.3"/><circle cx="346.2" cy="1058.5" r="2.3"/><circle cx="349.6" cy="1060.4" r="2.3"/><circle cx="353.0" cy="1053.5" r="2.3"/><circle cx="356.5" cy="1024.8" r="2.3"/><circle cx="359.9" cy="1060.4" r="2.3"/><circle cx="363.3" cy="1048.6" r="2.3"/><circle cx="366.9" cy="1043.4" r="2.3"/><circle cx="370.3" cy="1048.6" r="2.3"/><circle cx="373.6" cy="1056.2" r="2.3"/><circle cx="377.2" cy="1061.9" r="2.3"/><circle cx="380.6" cy="1066.6" r="2.3"/><circle cx="384.2" cy="1055.8" r="2.3"/><circle cx="387.6" cy="1062.6" r="2.3"/><circle cx="391.1" cy="1067.0" r="2.3"/><circle cx="394.4" cy="1060.9" r="2.3"/><circle cx="397.8" cy="1050.5" r="2.3"/><circle cx="401.2" cy="1060.9" r="2.3"/><circle cx="404.8" cy="1065.9" r="2.3"/><circle cx="408.1" cy="1060.2" r="2.3"/><circle cx="411.7" cy="1061.5" r="2.3"/><circle cx="415.1" cy="971.9" r="2.3"/><circle cx="418.5" cy="1055.2" r="2.3"/><circle cx="421.9" cy="1041.5" r="2.3"/><circle cx="425.4" cy="1055.4" r="2.3"/><circle cx="428.8" cy="1055.4" r="2.3"/><circle cx="432.4" cy="1045.7" r="2.3"/><circle cx="435.8" cy="1042.9" r="2.3"/><circle cx="439.4" cy="985.4" r="2.3"/><circle cx="442.7" cy="1017.6" r="2.3"/><circle cx="446.1" cy="1024.4" r="2.3"/><circle cx="449.7" cy="1031.3" r="2.3"/><circle cx="453.1" cy="1037.5" r="2.3"/><circle cx="456.4" cy="1025.0" r="2.3"/><circle cx="460.0" cy="1051.4" r="2.3"/><circle cx="463.4" cy="1014.7" r="2.3"/><circle cx="467.0" cy="1055.2" r="2.3"/><circle cx="470.4" cy="1065.1" r="2.3"/><circle cx="473.7" cy="1049.5" r="2.3"/><circle cx="477.1" cy="1050.7" r="2.3"/><circle cx="480.7" cy="1064.7" r="2.3"/><circle cx="484.1" cy="1057.5" r="2.3"/><circle cx="487.7" cy="1066.8" r="2.3"/><circle cx="491.0" cy="1022.7" r="2.3"/><circle cx="494.4" cy="1029.6" r="2.3"/><circle cx="498.0" cy="1048.6" r="2.3"/><circle cx="501.4" cy="1050.1" r="2.3"/><circle cx="505.0" cy="1078.6" r="2.3"/><circle cx="508.3" cy="1060.4" r="2.3"/><circle cx="511.7" cy="1060.0" r="2.3"/><circle cx="515.3" cy="1059.4" r="2.3"/><circle cx="518.7" cy="1058.1" r="2.3"/><circle cx="522.0" cy="1051.8" r="2.3"/><circle cx="525.6" cy="1057.5" r="2.3"/><circle cx="529.0" cy="1060.4" r="2.3"/><circle cx="532.6" cy="1061.7" r="2.3"/><circle cx="536.0" cy="1056.6" r="2.3"/><circle cx="539.3" cy="1063.0" r="2.3"/><circle cx="542.7" cy="1056.6" r="2.3"/><circle cx="546.3" cy="1052.0" r="2.3"/><circle cx="549.7" cy="1059.2" r="2.3"/><circle cx="553.1" cy="1059.6" r="2.3"/><circle cx="556.6" cy="1051.4" r="2.3"/><circle cx="560.0" cy="1032.4" r="2.3"/><circle cx="563.4" cy="1066.1" r="2.3"/><circle cx="567.0" cy="1048.2" r="2.3"/><circle cx="570.4" cy="1049.9" r="2.3"/><circle cx="573.7" cy="1059.2" r="2.3"/><circle cx="577.3" cy="994.4" r="2.3"/><circle cx="580.7" cy="964.5" r="2.3"/><circle cx="584.3" cy="1045.0" r="2.3"/><circle cx="587.6" cy="1064.2" r="2.3"/><circle cx="591.0" cy="1055.4" r="2.3"/><circle cx="594.6" cy="1032.8" r="2.3"/><circle cx="598.0" cy="1060.9" r="2.3"/><circle cx="601.6" cy="1042.3" r="2.3"/><circle cx="604.9" cy="1060.7" r="2.3"/><circle cx="608.3" cy="1056.6" r="2.3"/><circle cx="611.7" cy="1061.7" r="2.3"/><circle cx="615.3" cy="1048.0" r="2.3"/><circle cx="618.7" cy="1029.2" r="2.3"/><circle cx="622.0" cy="1047.6" r="2.3"/><circle cx="625.6" cy="1060.2" r="2.3"/><circle cx="629.0" cy="1075.8" r="2.3"/><circle cx="632.4" cy="1060.0" r="2.3"/><circle cx="636.0" cy="1046.9" r="2.3"/><circle cx="639.3" cy="1056.4" r="2.3"/></g></svg>
<div class="t" style="right:1141.5px;top:951.54px;font-size:12px;color:#d0d4da;font-weight:normal;letter-spacing:-0.25px;-webkit-text-stroke:0.2px #d0d4da;">15.63 ms</div>
<div class="t" style="right:1141.5px;top:979.54px;font-size:12px;color:#d0d4da;font-weight:normal;letter-spacing:-0.25px;-webkit-text-stroke:0.2px #d0d4da;">7.81 ms</div>
<div class="t" style="right:1141.5px;top:1007.54px;font-size:12px;color:#d0d4da;font-weight:normal;letter-spacing:-0.25px;-webkit-text-stroke:0.2px #d0d4da;">3.91 ms</div>
<div class="t" style="right:1141.5px;top:1035.54px;font-size:12px;color:#d0d4da;font-weight:normal;letter-spacing:-0.25px;-webkit-text-stroke:0.2px #d0d4da;">1.95 ms</div>
<div class="t" style="right:1141.5px;top:1063.54px;font-size:12px;color:#d0d4da;font-weight:normal;letter-spacing:-0.25px;-webkit-text-stroke:0.2px #d0d4da;">976.56 µs</div>
<div class="t" style="right:1141.5px;top:1092.54px;font-size:12px;color:#d0d4da;font-weight:normal;letter-spacing:-0.25px;-webkit-text-stroke:0.2px #d0d4da;">488.28 µs</div>
<div class="t" style="left:-126.5px;width:600px;text-align:center;top:1105.84px;font-size:12px;color:#d0d4da;font-weight:normal;letter-spacing:-0.25px;-webkit-text-stroke:0.2px #d0d4da;">06:00</div>
<div class="t" style="left:-43.64999999999998px;width:600px;text-align:center;top:1105.84px;font-size:12px;color:#d0d4da;font-weight:normal;letter-spacing:-0.25px;-webkit-text-stroke:0.2px #d0d4da;">08:00</div>
<div class="t" style="left:39.19999999999999px;width:600px;text-align:center;top:1105.84px;font-size:12px;color:#d0d4da;font-weight:normal;letter-spacing:-0.25px;-webkit-text-stroke:0.2px #d0d4da;">10:00</div>
<div class="t" style="left:122.04999999999995px;width:600px;text-align:center;top:1105.84px;font-size:12px;color:#d0d4da;font-weight:normal;letter-spacing:-0.25px;-webkit-text-stroke:0.2px #d0d4da;">12:00</div>
<div class="t" style="left:204.89999999999998px;width:600px;text-align:center;top:1105.84px;font-size:12px;color:#d0d4da;font-weight:normal;letter-spacing:-0.25px;-webkit-text-stroke:0.2px #d0d4da;">14:00</div>
<div class="t" style="left:287.75px;width:600px;text-align:center;top:1105.84px;font-size:12px;color:#d0d4da;font-weight:normal;letter-spacing:-0.25px;-webkit-text-stroke:0.2px #d0d4da;">16:00</div>
<div class="t" style="right:781px;top:1131.34px;font-size:12px;color:#33a2e5;font-weight:normal;letter-spacing:0px;-webkit-text-stroke:0.5px #33a2e5;">min</div>
<div class="t" style="right:706px;top:1131.34px;font-size:12px;color:#33a2e5;font-weight:normal;letter-spacing:0px;-webkit-text-stroke:0.5px #33a2e5;">max</div>
<div class="t" style="right:654px;top:1131.34px;font-size:12px;color:#33a2e5;font-weight:normal;letter-spacing:0px;-webkit-text-stroke:0.5px #33a2e5;">avg</div>
<svg class="s" style="left:629px;top:1133.5px;" width="9" height="7" viewBox="0 0 9 7"><path d="M1.2 1.8 L4.5 5 L7.8 1.8" fill="none" stroke="#33a2e5" stroke-width="1.4"/></svg>
<div class="b" style="left:89.7px;top:1171.6px;width:563px;height:26px;background:#18191c;border-radius:0px;box-sizing:border-box;"></div>
<div class="b" style="left:102.5px;top:1158.3px;width:11px;height:2px;background:#eab839;border-radius:0px;box-sizing:border-box;"></div>
<div class="t" style="left:123px;top:1153.14px;font-size:12px;color:#d8d9da;font-weight:normal;letter-spacing:-0.2px;-webkit-text-stroke:0.2px #d8d9da;">Write</div>
<div class="t" style="right:781px;top:1153.14px;font-size:12px;color:#d8d9da;font-weight:normal;letter-spacing:-0.25px;-webkit-text-stroke:0.2px #d8d9da;">781.51 µs</div>
<div class="t" style="right:706px;top:1153.14px;font-size:12px;color:#d8d9da;font-weight:normal;letter-spacing:-0.25px;-webkit-text-stroke:0.2px #d8d9da;">13.89 ms</div>
<div class="t" style="right:638px;top:1153.14px;font-size:12px;color:#d8d9da;font-weight:normal;letter-spacing:-0.25px;-webkit-text-stroke:0.2px #d8d9da;">2.30 ms</div>
<div class="b" style="left:102.5px;top:1184.2px;width:11px;height:2px;background:#7eb26d;border-radius:0px;box-sizing:border-box;"></div>
<div class="t" style="left:123px;top:1179.04px;font-size:12px;color:#d8d9da;font-weight:normal;letter-spacing:-0.2px;-webkit-text-stroke:0.2px #d8d9da;">Read</div>
<div class="t" style="right:781px;top:1179.04px;font-size:12px;color:#d8d9da;font-weight:normal;letter-spacing:-0.25px;-webkit-text-stroke:0.2px #d8d9da;">0 s</div>
<div class="t" style="right:706px;top:1179.04px;font-size:12px;color:#d8d9da;font-weight:normal;letter-spacing:-0.25px;-webkit-text-stroke:0.2px #d8d9da;">1.36 ms</div>
<div class="t" style="right:638px;top:1179.04px;font-size:12px;color:#d8d9da;font-weight:normal;letter-spacing:-0.25px;-webkit-text-stroke:0.2px #d8d9da;">9.38 µs</div>
<div class="b" style="left:674px;top:911px;width:590px;height:296px;background:#141619;border:1px solid #202226;border-radius:2px;box-sizing:border-box;"></div>
<svg class="s" style="left:675px;top:912px;" width="28" height="28" viewBox="0 0 28 28"><path d="M0 0 H27 L0 27 Z" fill="#232629"/><g fill="#9ea2a9"><circle cx="8" cy="4.8" r="1.2"/><rect x="5.8" y="7.3" width="3.2" height="1.5"/><rect x="7" y="7.3" width="2" height="5.5"/><rect x="5.8" y="11.2" width="4.3" height="1.7"/></g></svg>
<div class="t" style="left:660px;width:600px;text-align:center;top:919.15px;font-size:14px;color:#d8d9da;font-weight:normal;letter-spacing:0px;-webkit-text-stroke:0.5px #d8d9da;">Disk Operations</div>
<svg class="s" style="left:0px;top:0px;pointer-events:none" width="1280" height="1280" viewBox="0 0 1280 1280"><g stroke="rgba(255,255,255,0.18)" stroke-width="1"><line x1="739" y1="957.5" x2="1238" y2="957.5" /><line x1="739" y1="992.5" x2="1238" y2="992.5" /><line x1="739" y1="1027.5" x2="1238" y2="1027.5" /><line x1="739" y1="1062.5" x2="1238" y2="1062.5" /><line x1="739" y1="1097.5" x2="1238" y2="1097.5" /><line x1="768.5" y1="957" x2="768.5" y2="1098" /><line x1="851.5" y1="957" x2="851.5" y2="1098" /><line x1="935.5" y1="957" x2="935.5" y2="1098" /><line x1="1018.5" y1="957" x2="1018.5" y2="1098" /><line x1="1102.5" y1="957" x2="1102.5" y2="1098" /><line x1="1185.5" y1="957" x2="1185.5" y2="1098" /></g><rect x="739" y="1062.6" width="499" height="35.2" fill="rgba(234,184,57,0.2)"/><path d="M739 1097.6 L761.5 1097.6 L765 972.5 L769 1097.6 L1238 1097.6" fill="none" stroke="#7eb26d" stroke-width="2.2"/><path d="M739.1 1061.2 L741.5 1065.2 L745.0 1064.1 L750.9 1051.9 L757.9 1065.2 L761.4 1055.9 L764.9 1014.8 L768.4 1055.9 L772.0 1053.5 L775.5 1066.4 L779.0 1067.6 L782.5 1059.8 L786.0 1062.9 L789.5 1057.5 L793.0 1061.7 L796.6 1054.7 L800.1 1060.1 L803.6 1048.1 L806.6 1044.8 L810.6 1061.7 L814.1 1061.7 L820.0 1051.2 L824.7 1061.7 L828.2 1059.4 L831.7 1064.1 L837.6 1058.9 L842.3 1064.1 L844.6 1063.6 L848.6 1047.7 L851.6 1065.2 L856.3 1065.2 L859.8 1067.6 L865.7 1066.4 L869.2 1061.7 L872.7 1066.9 L876.2 1060.5 L879.8 1065.2 L883.3 1059.4 L886.8 1061.2 L890.3 1050.0 L893.8 1009.7 L897.3 1061.7 L900.9 1071.1 L904.4 1062.9 L907.9 1058.9 L914.9 1062.9 L920.8 1061.2 L925.5 1062.9 L927.8 1059.4 L931.3 1068.3 L934.8 1044.8 L939.1 1062.9 L941.9 1057.5 L946.6 1061.2 L948.9 1060.5 L952.4 1069.9 L955.9 1060.5 L960.0 1058.4 L965.9 1052.0 L969.8 1068.4 L972.9 1064.2 L976.9 1034.9 L980.6 1060.7 L984.1 1054.4 L988.1 1060.7 L992.8 1056.0 L997.5 1061.4 L1003.4 1056.0 L1010.4 1059.5 L1015.1 1063.0 L1018.6 1006.1 L1022.1 1056.7 L1025.6 1060.7 L1029.1 1055.5 L1032.7 1063.0 L1039.7 1051.3 L1043.2 1060.7 L1046.7 1055.5 L1053.8 1060.7 L1057.3 1065.4 L1060.3 1043.1 L1064.3 1045.9 L1067.8 1057.2 L1072.0 1060.7 L1074.8 1059.5 L1078.4 1063.0 L1084.2 1059.1 L1087.7 1064.2 L1094.8 1058.4 L1098.3 1063.0 L1101.8 1041.2 L1105.3 1063.0 L1108.1 1058.4 L1112.3 1066.6 L1115.9 1063.8 L1119.4 1056.0 L1126.4 1052.0 L1131.1 1054.8 L1135.8 1065.4 L1140.5 1061.9 L1144.0 1017.8 L1147.5 1051.3 L1151.0 1061.9 L1154.5 1061.9 L1158.0 1053.7 L1161.6 1060.7 L1165.1 1054.8 L1169.3 1061.9 L1174.5 1062.3 L1179.1 1065.4 L1182.2 1057.2 L1185.5 1015.5 L1188.5 1043.1 L1192.0 1054.8 L1195.5 1061.4 L1199.1 1052.0 L1202.6 1058.4 L1206.1 1054.4 L1209.6 1063.0 L1213.1 1057.2 L1217.8 1061.9 L1222.5 1058.4 L1227.2 1045.9 L1230.7 1061.4 L1234.2 1061.9 L1237.7 1050.2" fill="none" stroke="#f2c037" stroke-width="2.3" stroke-linejoin="round"/></svg>
<div class="t" style="right:547px;top:951.54px;font-size:12px;color:#d0d4da;font-weight:normal;letter-spacing:-0.25px;-webkit-text-stroke:0.2px #d0d4da;">1.00 iops</div>
<div class="t" style="right:547px;top:986.54px;font-size:12px;color:#d0d4da;font-weight:normal;letter-spacing:-0.25px;-webkit-text-stroke:0.2px #d0d4da;">0.75 iops</div>
<div class="t" style="right:547px;top:1021.54px;font-size:12px;color:#d0d4da;font-weight:normal;letter-spacing:-0.25px;-webkit-text-stroke:0.2px #d0d4da;">0.50 iops</div>
<div class="t" style="right:547px;top:1056.54px;font-size:12px;color:#d0d4da;font-weight:normal;letter-spacing:-0.25px;-webkit-text-stroke:0.2px #d0d4da;">0.25 iops</div>
<div class="t" style="right:547px;top:1091.64px;font-size:12px;color:#d0d4da;font-weight:normal;letter-spacing:-0.25px;-webkit-text-stroke:0.2px #d0d4da;">0 iops</div>
<div class="t" style="left:468.5px;width:600px;text-align:center;top:1105.84px;font-size:12px;color:#d0d4da;font-weight:normal;letter-spacing:-0.25px;-webkit-text-stroke:0.2px #d0d4da;">06:00</div>
<div class="t" style="left:551.5px;width:600px;text-align:center;top:1105.84px;font-size:12px;color:#d0d4da;font-weight:normal;letter-spacing:-0.25px;-webkit-text-stroke:0.2px #d0d4da;">08:00</div>
<div class="t" style="left:635.5px;width:600px;text-align:center;top:1105.84px;font-size:12px;color:#d0d4da;font-weight:normal;letter-spacing:-0.25px;-webkit-text-stroke:0.2px #d0d4da;">10:00</div>
<div class="t" style="left:718.5px;width:600px;text-align:center;top:1105.84px;font-size:12px;color:#d0d4da;font-weight:normal;letter-spacing:-0.25px;-webkit-text-stroke:0.2px #d0d4da;">12:00</div>
<div class="t" style="left:802.5px;width:600px;text-align:center;top:1105.84px;font-size:12px;color:#d0d4da;font-weight:normal;letter-spacing:-0.25px;-webkit-text-stroke:0.2px #d0d4da;">14:00</div>
<div class="t" style="left:885.5px;width:600px;text-align:center;top:1105.84px;font-size:12px;color:#d0d4da;font-weight:normal;letter-spacing:-0.25px;-webkit-text-stroke:0.2px #d0d4da;">16:00</div>
<div class="t" style="right:188.20000000000005px;top:1131.34px;font-size:12px;color:#33a2e5;font-weight:normal;letter-spacing:0px;-webkit-text-stroke:0.5px #33a2e5;">min</div>
<div class="t" style="right:114.29999999999995px;top:1131.34px;font-size:12px;color:#33a2e5;font-weight:normal;letter-spacing:0px;-webkit-text-stroke:0.5px #33a2e5;">max</div>
<div class="t" style="right:56px;top:1131.34px;font-size:12px;color:#33a2e5;font-weight:normal;letter-spacing:0px;-webkit-text-stroke:0.5px #33a2e5;">avg</div>
<svg class="s" style="left:1227px;top:1133.5px;" width="9" height="7" viewBox="0 0 9 7"><path d="M1.2 1.8 L4.5 5 L7.8 1.8" fill="none" stroke="#33a2e5" stroke-width="1.4"/></svg>
<div class="b" style="left:687.6px;top:1171.6px;width:563px;height:26px;background:#18191c;border-radius:0px;box-sizing:border-box;"></div>
<div class="b" style="left:701px;top:1158.3px;width:11px;height:2px;background:#eab839;border-radius:0px;box-sizing:border-box;"></div>
<div class="t" style="left:721px;top:1153.14px;font-size:12px;color:#d8d9da;font-weight:normal;letter-spacing:-0.2px;-webkit-text-stroke:0.2px #d8d9da;">Write</div>
<div class="t" style="right:188.20000000000005px;top:1153.14px;font-size:12px;color:#d8d9da;font-weight:normal;letter-spacing:-0.25px;-webkit-text-stroke:0.2px #d8d9da;">0.19 iops</div>
<div class="t" style="right:114.29999999999995px;top:1153.14px;font-size:12px;color:#d8d9da;font-weight:normal;letter-spacing:-0.25px;-webkit-text-stroke:0.2px #d8d9da;">0.65 iops</div>
<div class="t" style="right:40.40000000000009px;top:1153.14px;font-size:12px;color:#d8d9da;font-weight:normal;letter-spacing:-0.25px;-webkit-text-stroke:0.2px #d8d9da;">0.29 iops</div>
<div class="b" style="left:701px;top:1184.2px;width:11px;height:2px;background:#7eb26d;border-radius:0px;box-sizing:border-box;"></div>
<div class="t" style="left:721px;top:1179.04px;font-size:12px;color:#d8d9da;font-weight:normal;letter-spacing:-0.2px;-webkit-text-stroke:0.2px #d8d9da;">Read</div>
<div class="t" style="right:188.20000000000005px;top:1179.04px;font-size:12px;color:#d8d9da;font-weight:normal;letter-spacing:-0.25px;-webkit-text-stroke:0.2px #d8d9da;">0 iops</div>
<div class="t" style="right:114.29999999999995px;top:1179.04px;font-size:12px;color:#d8d9da;font-weight:normal;letter-spacing:-0.25px;-webkit-text-stroke:0.2px #d8d9da;">0.89 iops</div>
<div class="t" style="right:40.40000000000009px;top:1179.04px;font-size:12px;color:#d8d9da;font-weight:normal;letter-spacing:-0.25px;-webkit-text-stroke:0.2px #d8d9da;">0.01 iops</div>
<div class="b" style="left:76px;top:1215px;width:590px;height:120px;background:#141619;border:1px solid #202226;border-radius:2px;box-sizing:border-box;"></div>
<svg class="s" style="left:77px;top:1216px;" width="28" height="28" viewBox="0 0 28 28"><path d="M0 0 H27 L0 27 Z" fill="#232629"/><g fill="#9ea2a9"><circle cx="8" cy="4.8" r="1.2"/><rect x="5.8" y="7.3" width="3.2" height="1.5"/><rect x="7" y="7.3" width="2" height="5.5"/><rect x="5.8" y="11.2" width="4.3" height="1.7"/></g></svg>
<div class="t" style="left:61.60000000000002px;width:600px;text-align:center;top:1223.15px;font-size:14px;color:#d8d9da;font-weight:normal;letter-spacing:0px;-webkit-text-stroke:0.5px #d8d9da;">Disk Bandwidth</div>
<svg class="s" style="left:0px;top:0px;pointer-events:none" width="1280" height="1280" viewBox="0 0 1280 1280"><g stroke="rgba(255,255,255,0.18)" stroke-width="1"><line x1="147.4" y1="1261.5" x2="641" y2="1261.5" /><line x1="178.5" y1="1261" x2="178.5" y2="1291" /><line x1="260.5" y1="1261" x2="260.5" y2="1291" /><line x1="342.5" y1="1261" x2="342.5" y2="1291" /><line x1="424.5" y1="1261" x2="424.5" y2="1291" /><line x1="506.5" y1="1261" x2="506.5" y2="1291" /><line x1="588.5" y1="1261" x2="588.5" y2="1291" /></g><line x1="175" y1="1268" x2="175" y2="1290" stroke="#f2c037" stroke-width="2"/></svg>
<div class="t" style="right:1137.3px;top:1255.24px;font-size:12px;color:#d0d4da;font-weight:normal;letter-spacing:-0.25px;-webkit-text-stroke:0.2px #d0d4da;">30.00 kB/s</div>
<div class="b" style="left:674px;top:1215px;width:590px;height:120px;background:#141619;border:1px solid #202226;border-radius:2px;box-sizing:border-box;"></div>
<svg class="s" style="left:675px;top:1216px;" width="28" height="28" viewBox="0 0 28 28"><path d="M0 0 H27 L0 27 Z" fill="#232629"/><g fill="#9ea2a9"><circle cx="8" cy="4.8" r="1.2"/><rect x="5.8" y="7.3" width="3.2" height="1.5"/><rect x="7" y="7.3" width="2" height="5.5"/><rect x="5.8" y="11.2" width="4.3" height="1.7"/></g></svg>
<div class="t" style="left:659.8px;width:600px;text-align:center;top:1223.15px;font-size:14px;color:#d8d9da;font-weight:normal;letter-spacing:0px;-webkit-text-stroke:0.5px #d8d9da;">Disk Load</div>
<svg class="s" style="left:0px;top:0px;pointer-events:none" width="1280" height="1280" viewBox="0 0 1280 1280"><g stroke="rgba(255,255,255,0.18)" stroke-width="1"><line x1="720" y1="1261.5" x2="1239.6" y2="1261.5" /><line x1="750.5" y1="1261" x2="750.5" y2="1291" /><line x1="836.5" y1="1261" x2="836.5" y2="1291" /><line x1="923.5" y1="1261" x2="923.5" y2="1291" /><line x1="1010.5" y1="1261" x2="1010.5" y2="1291" /><line x1="1096.5" y1="1261" x2="1096.5" y2="1291" /><line x1="1183.5" y1="1261" x2="1183.5" y2="1291" /></g></svg>
<div class="t" style="right:566px;top:1255.24px;font-size:12px;color:#d0d4da;font-weight:normal;letter-spacing:-0.25px;-webkit-text-stroke:0.2px #d0d4da;">0.004</div>
</body></html>
